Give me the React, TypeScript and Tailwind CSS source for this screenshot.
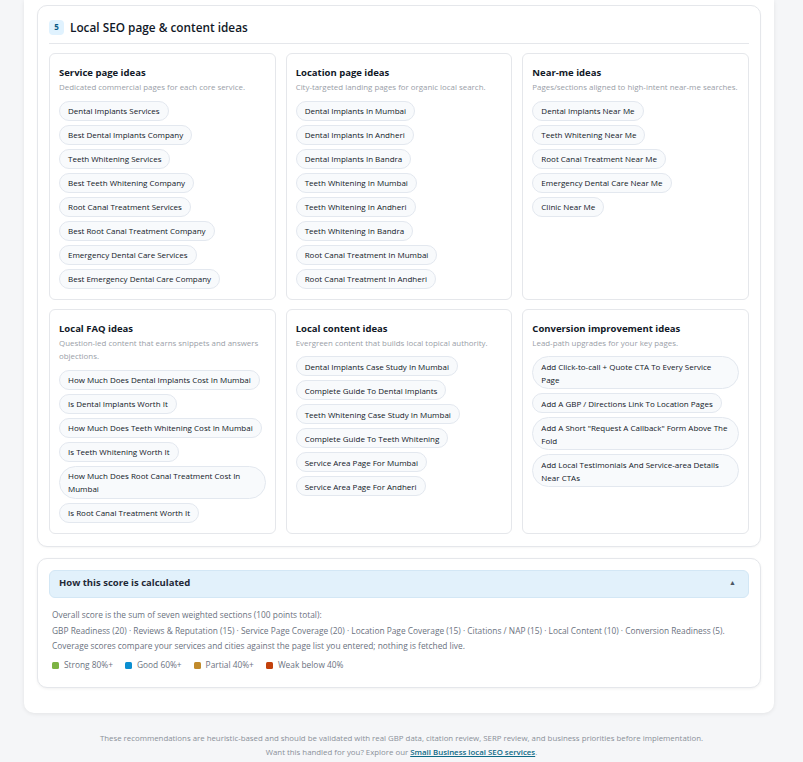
import React from 'react';

interface IdeaGroup {
  title: string
  description: string
  items: string[]
}

const groups: IdeaGroup[] = [
  {
    title: "Service page ideas",
    description: "Dedicated commercial pages for each core service.",
    items: [
      "Dental Implants Services",
      "Best Dental Implants Company",
      "Teeth Whitening Services",
      "Best Teeth Whitening Company",
      "Root Canal Treatment Services",
      "Best Root Canal Treatment Company",
      "Emergency Dental Care Services",
      "Best Emergency Dental Care Company",
    ],
  },
  {
    title: "Location page ideas",
    description: "City-targeted landing pages for organic local search.",
    items: [
      "Dental Implants In Mumbai",
      "Dental Implants In Andheri",
      "Dental Implants In Bandra",
      "Teeth Whitening In Mumbai",
      "Teeth Whitening In Andheri",
      "Teeth Whitening In Bandra",
      "Root Canal Treatment In Mumbai",
      "Root Canal Treatment In Andheri",
    ],
  },
  {
    title: "Near-me ideas",
    description: "Pages/sections aligned to high-intent near-me searches.",
    items: [
      "Dental Implants Near Me",
      "Teeth Whitening Near Me",
      "Root Canal Treatment Near Me",
      "Emergency Dental Care Near Me",
      "Clinic Near Me",
    ],
  },
  {
    title: "Local FAQ ideas",
    description: "Question-led content that earns snippets and answers objections.",
    items: [
      "How Much Does Dental Implants Cost In Mumbai",
      "Is Dental Implants Worth It",
      "How Much Does Teeth Whitening Cost In Mumbai",
      "Is Teeth Whitening Worth It",
      "How Much Does Root Canal Treatment Cost In Mumbai",
      "Is Root Canal Treatment Worth It",
    ],
  },
  {
    title: "Local content ideas",
    description: "Evergreen content that builds local topical authority.",
    items: [
      "Dental Implants Case Study In Mumbai",
      "Complete Guide To Dental Implants",
      "Teeth Whitening Case Study In Mumbai",
      "Complete Guide To Teeth Whitening",
      "Service Area Page For Mumbai",
      "Service Area Page For Andheri",
    ],
  },
  {
    title: "Conversion improvement ideas",
    description: "Lead-path upgrades for your key pages.",
    items: [
      "Add Click-to-call + Quote CTA To Every Service Page",
      "Add A GBP / Directions Link To Location Pages",
      "Add A Short \"Request A Callback\" Form Above The Fold",
      "Add Local Testimonials And Service-area Details Near CTAs",
    ],
  },
]

const legend = [
  { label: "Strong 80%+", color: "bg-[#7cb342]" },
  { label: "Good 60%+", color: "bg-[#0b8fd1]" },
  { label: "Partial 40%+", color: "bg-[#c18a2b]" },
  { label: "Weak below 40%", color: "bg-[#c2410c]" },
]

function IdeaCard({ group }: { group: IdeaGroup }) {
  return (
    <div className="rounded-[6px] border border-[#e5e7eb] bg-white px-[9px] pt-[12px] pb-[10px]">
      <h3 className="text-[9.5px] leading-[14px] font-bold text-[#111827]">{group.title}</h3>
      <p className="mt-[1px] text-[7.9px] leading-[13.5px] text-[#9aa0a8]">{group.description}</p>
      <div className="mt-[6px] flex flex-col items-start gap-[4px]">
        {group.items.map((item, i) => (
          <span
            key={i}
            className="rounded-full border border-[#e3e8ef] bg-[#f8fafc] px-[8px] py-[2.5px] text-[8px] leading-[13px] text-[#111827]"
          >
            {item}
          </span>
        ))}
      </div>
    </div>
  )
}

export default function App() {
  return (
    <div className="min-h-[762px] bg-[#f5f6f8] font-['Open_Sans',sans-serif]">
      <div className="mx-[24px] w-[750px] rounded-b-[10px] bg-white px-[13px] pt-[5px] pb-[25px] shadow-[0_1px_4px_rgba(0,0,0,0.08)]">
        {/* Section 5 */}
        <section className="rounded-[10px] border border-[#e5e7eb] bg-white px-[11px] pt-[13px] pb-[12px] shadow-[0_1px_2px_rgba(0,0,0,0.04)]">
          <div className="flex items-center gap-[6px] border-b border-[#e5e7eb] pb-[8px]">
            <span className="flex h-[15px] w-[15px] items-center justify-center rounded-[4px] bg-[#e0f2fe] text-[8px] font-bold text-[#075985]">5</span>
            <h2 className="text-[11.8px] leading-[16px] font-semibold text-[#111827]">Local SEO page &amp; content ideas</h2>
          </div>
          <div className="mt-[9px] grid grid-cols-3 gap-x-[10px] gap-y-[9px]">
            {groups.map((g, i) => (
              <IdeaCard key={i} group={g} />
            ))}
          </div>
        </section>

        {/* Score explanation */}
        <section className="mt-[11px] rounded-[10px] border border-[#e5e7eb] bg-white px-[11px] pt-[11px] pb-[14px] shadow-[0_1px_3px_rgba(0,0,0,0.06)]">
          <div className="flex h-[28px] items-center justify-between rounded-[6px] border border-[#d3e7f5] bg-[#e2f1fb] pl-[9px] pr-[12px]">
            <span className="text-[9.5px] font-bold text-[#1f2937]">How this score is calculated</span>
            <span className="text-[7px] text-[#4b5563]">▲</span>
          </div>
          <div className="mt-[10px] pl-[3px] text-[8.35px] leading-[14.5px] text-[#6b7280]">
            <p>Overall score is the sum of seven weighted sections (100 points total):</p>
            <p className="mt-[2px]">
              GBP Readiness (20) · Reviews &amp; Reputation (15) · Service Page Coverage (20) · Location Page Coverage (15) · Citations / NAP (15) · Local Content (10) · Conversion Readiness (5).
            </p>
            <p>Coverage scores compare your services and cities against the page list you entered; nothing is fetched live.</p>
            <div className="mt-[5px] flex items-center gap-[12px]">
              {legend.map((l, i) => (
                <span key={i} className="flex items-center gap-[5px]">
                  <span className={`h-[7px] w-[7px] rounded-[1.5px] ${l.color}`} />
                  {l.label}
                </span>
              ))}
            </div>
          </div>
        </section>
      </div>

      <footer className="pt-[18px] text-center text-[7.85px] leading-[14px] text-[#8a9099]">
        <p>These recommendations are heuristic-based and should be validated with real GBP data, citation review, SERP review, and business priorities before implementation.</p>
        <p>
          Want this handled for you? Explore our{" "}
          <a href="#" className="font-semibold text-[#0e6a87] underline">Small Business local SEO services</a>.
        </p>
      </footer>
    </div>
  )
}
